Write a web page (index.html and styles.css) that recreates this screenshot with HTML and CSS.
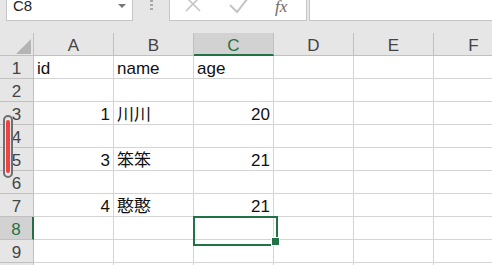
FILE: index.html
```html
<!DOCTYPE html>
<html lang="zh-CN">
  <head>
    <meta charset="UTF-8" />
    <meta name="viewport" content="width=device-width, initial-scale=1.0" />
    <title>Book1 - Excel</title>
    <link rel="stylesheet" href="styles.css">
  </head>
  <body>
    <div class="formula-bar">
      <div class="name-box">
        <span>C8</span>
        <span class="drop"></span>
      </div>
      <div class="grip"><i></i><i></i><i></i></div>
      <div class="fx-buttons">
        <svg class="icon" width="16" height="20" viewBox="0 0 16 20">
          <path d="M1 -3 L15 11 M15 -3 L1 11" stroke="#c4c4c4" stroke-width="1.6" fill="none" />
        </svg>
        <svg class="icon" width="20" height="20" viewBox="0 0 20 20">
          <path d="M1 5 L8 12 L19 -2" stroke="#c4c4c4" stroke-width="2" fill="none" />
        </svg>
        <span class="fx">fx</span>
      </div>
      <div class="formula-input"></div>
    </div>

    <div class="sheet">
      <div class="corner"><div class="tri"></div></div>
      <div class="col-head">A</div>
      <div class="col-head">B</div>
      <div class="col-head active">C</div>
      <div class="col-head">D</div>
      <div class="col-head">E</div>
      <div class="col-head">F</div>

      <div class="row-head">1</div>
      <div class="cell">id</div>
      <div class="cell">name</div>
      <div class="cell">age</div>
      <div class="cell"></div>
      <div class="cell"></div>
      <div class="cell"></div>

      <div class="row-head">2</div>
      <div class="cell"></div>
      <div class="cell"></div>
      <div class="cell"></div>
      <div class="cell"></div>
      <div class="cell"></div>
      <div class="cell"></div>

      <div class="row-head">3</div>
      <div class="cell num">1</div>
      <div class="cell">川川</div>
      <div class="cell num">20</div>
      <div class="cell"></div>
      <div class="cell"></div>
      <div class="cell"></div>

      <div class="row-head">4</div>
      <div class="cell"></div>
      <div class="cell"></div>
      <div class="cell"></div>
      <div class="cell"></div>
      <div class="cell"></div>
      <div class="cell"></div>

      <div class="row-head">5</div>
      <div class="cell num">3</div>
      <div class="cell">笨笨</div>
      <div class="cell num">21</div>
      <div class="cell"></div>
      <div class="cell"></div>
      <div class="cell"></div>

      <div class="row-head">6</div>
      <div class="cell"></div>
      <div class="cell"></div>
      <div class="cell"></div>
      <div class="cell"></div>
      <div class="cell"></div>
      <div class="cell"></div>

      <div class="row-head">7</div>
      <div class="cell num">4</div>
      <div class="cell">憨憨</div>
      <div class="cell num">21</div>
      <div class="cell"></div>
      <div class="cell"></div>
      <div class="cell"></div>

      <div class="row-head active">8</div>
      <div class="cell"></div>
      <div class="cell"></div>
      <div class="cell selected"></div>
      <div class="cell"></div>
      <div class="cell"></div>
      <div class="cell"></div>

      <div class="row-head">9</div>
      <div class="cell"></div>
      <div class="cell"></div>
      <div class="cell"></div>
      <div class="cell"></div>
      <div class="cell"></div>
      <div class="cell"></div>

      <div class="row-head"></div>
      <div class="cell"></div>
      <div class="cell"></div>
      <div class="cell"></div>
      <div class="cell"></div>
      <div class="cell"></div>
      <div class="cell"></div>

      <!-- red marker drawn over the row headers -->
      <div class="marker"><div class="marker-fill"></div></div>
    </div>
  </body>
</html>
```

FILE: styles.css
```css
* {
  margin: 0;
  padding: 0;
  box-sizing: border-box;
  font-family: "Liberation Sans", "Noto Sans CJK SC", sans-serif;
}
body {
  background-color: #fff;
  width: 492px;
  height: 265px;
  overflow: hidden;
}
.formula-bar {
  display: flex;
  align-items: flex-start;
  height: 33px;
  padding-left: 6px;
  background-color: #e6e6e6;
}
.name-box {
  display: flex;
  justify-content: space-between;
  width: 127px;
  height: 21px;
  padding: 0 6px 0 6px;
  background: #fff;
  border: 1px solid #c6c6c6;
  border-top: none;
  font-size: 15px;
  line-height: 12px;
  color: #222;
}
.drop {
  margin-top: 4px;
  width: 0;
  height: 0;
  border-left: 4px solid transparent;
  border-right: 4px solid transparent;
  border-top: 4px solid #777;
}
.grip {
  display: flex;
  flex-direction: column;
  gap: 2px;
  margin: 0 16px 0 17px;
}
.grip i {
  display: block;
  width: 3px;
  height: 2px;
  background: #a8a8a8;
}
.fx-buttons {
  display: flex;
  align-items: flex-start;
  width: 138px;
  height: 21px;
  padding-left: 15px;
  background: #fff;
  border: 1px solid #c6c6c6;
  border-top: none;
}
.icon {
  display: block;
}
.icon + .icon {
  margin-left: 28px;
}
.fx {
  margin-left: 26px;
  font-family: "Liberation Serif", serif;
  font-style: italic;
  font-size: 17px;
  line-height: 13px;
  color: #6a6a6a;
}
.formula-input {
  flex: 1;
  height: 21px;
  margin-left: 2px;
  background: #fff;
  border: 1px solid #c6c6c6;
  border-top: none;
  border-right: none;
}
.sheet {
  position: relative;
  display: grid;
  grid-template-columns: 34px repeat(6, 80px);
  grid-auto-rows: 23px;
  font-size: 17px;
  line-height: 20px;
}
.corner,
.col-head,
.row-head {
  background-color: #e6e6e6;
  border-right: 1px solid #c0c0c0;
  border-bottom: 1px solid #c0c0c0;
  color: #444;
  text-align: center;
}
.corner {
  display: flex;
  justify-content: flex-end;
  align-items: flex-end;
  padding: 0 2px 1px 0;
}
.tri {
  width: 15px;
  height: 15px;
  background: #b4b4b4;
  clip-path: polygon(100% 0, 100% 100%, 0 100%);
}
.col-head,
.row-head {
  padding-top: 3px;
}
.col-head.active {
  background-color: #d2d2d2;
  border-bottom: 2px solid #217346;
  color: #217346;
}
.row-head.active {
  background-color: #d2d2d2;
  border-right: 2px solid #217346;
  color: #217346;
}
.cell {
  border-right: 1px solid #d4d4d4;
  border-bottom: 1px solid #d4d4d4;
  padding: 3px 3px 0;
  color: #111;
  white-space: nowrap;
}
.num {
  text-align: right;
}
.cell.selected {
  position: relative;
}
.cell.selected::after {
  content: "";
  position: absolute;
  left: -1px;
  top: -1px;
  width: 81px;
  height: 26px;
  border: 2px solid #217346;
}
.cell.selected::before {
  content: "";
  position: absolute;
  left: 77px;
  top: 20px;
  width: 7px;
  height: 7px;
  background: #217346;
  border: 1px solid #fff;
  z-index: 1;
}
.marker {
  position: absolute;
  left: 3px;
  top: 82px;
  width: 10px;
  height: 63px;
  border: 2px solid #6f6f6f;
  border-radius: 5px;
  background: #e6e6e6;
  padding: 3px 1px;
}
.marker-fill {
  height: 100%;
  background: #f04343;
  border-radius: 2px;
}
```
